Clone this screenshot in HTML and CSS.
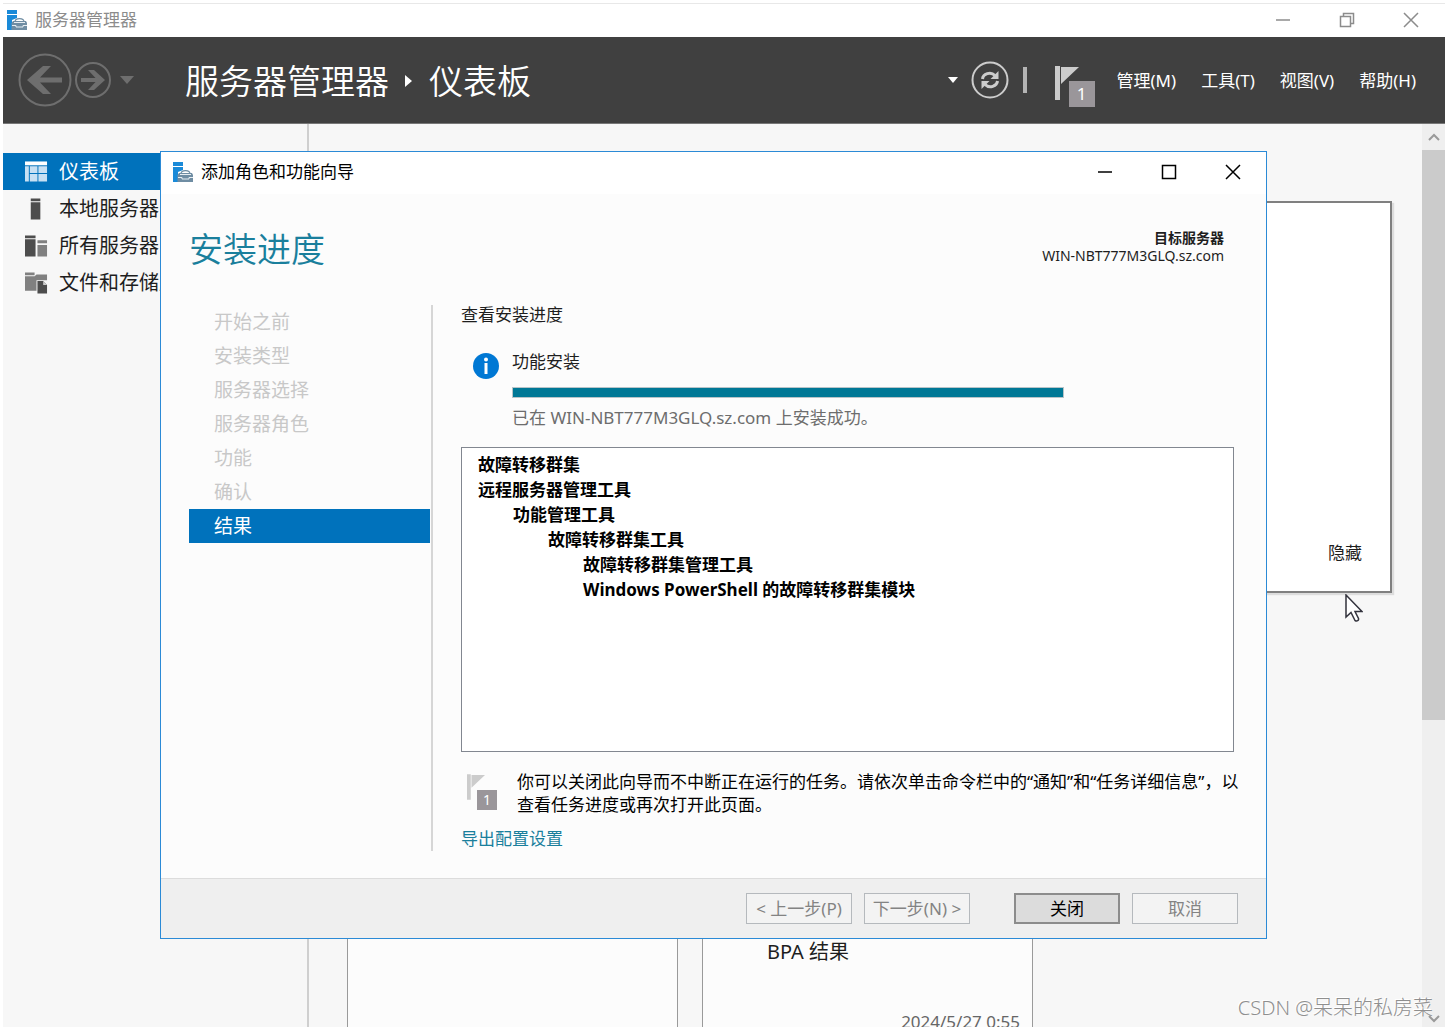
FILE: index.html
```html
<!DOCTYPE html>
<html lang="zh-CN">
<head>
<meta charset="utf-8">
<title>服务器管理器</title>
<link rel="stylesheet" href="styles.css">
</head>
<body>
<svg class="defs" aria-hidden="true">
  <symbol id="app-icon" viewBox="0 0 20 20">
    <path fill="#1a8ad8" d="M0 0h10v4H0zM0 5h10v3L5 10v10H0z"/>
    <path fill="none" stroke="#6f8da3" stroke-width="1.200" d="M8 12c0-4.500 9-4.500 9 0"/>
    <path fill="#6f8da3" d="M6 11h13l1 2v7H4.500v-7z"/>
    <path fill="none" stroke="#e6edf2" d="M7 12.500h11M5 15.500h4v1.500h7v-1.500h4"/>
  </symbol>
  <symbol id="flag-icon" viewBox="0 0 24 34">
    <path d="M0 0h5v34H0zM6 1h18L6 18z"/>
  </symbol>
</svg>
<div class="window">
  <header class="titlebar">
    <svg class="app-icon"><use href="#app-icon"/></svg>
    <span class="titlebar-text">服务器管理器</span>
    <div class="controls">
      <button class="control" aria-label="最小化"><svg viewBox="0 0 16 16"><path d="M1 8h14"/></svg></button>
      <button class="control" aria-label="还原"><svg viewBox="0 0 16 16"><path d="M1.500 4.500h10v10h-10zM4.500 4V1.500h10v10H12"/></svg></button>
      <button class="control" aria-label="关闭"><svg viewBox="0 0 16 16"><path d="M1 1l14 14M15 1L1 15"/></svg></button>
    </div>
  </header>
  <div class="banner">
    <div class="history">
      <button class="back" aria-label="后退"><svg viewBox="0 0 54 54"><circle cx="27" cy="27" r="25.500" fill="none" stroke="#6e6e6e" stroke-width="2"/><path fill="#6e6e6e" d="M9 27l16-14h8L22 24.500h22v5H22L33 41h-8z"/></svg></button>
      <button class="forward" aria-label="前进"><svg viewBox="0 0 38 38"><circle cx="19" cy="19" r="17" fill="none" stroke="#6e6e6e" stroke-width="2"/><path fill="#6e6e6e" d="M31 19L20 9h-6l7.500 8H7v4h14.500L14 29h6z"/></svg></button>
      <button class="recent" aria-label="最近的页面"><svg viewBox="0 0 14 8"><path fill="#6e6e6e" d="M0 0h14L7 8z"/></svg></button>
    </div>
    <h1 class="crumbs"><span>服务器管理器</span><svg viewBox="0 0 8 12"><path fill="#fff" d="M0 0l7 6-7 6z"/></svg><span>仪表板</span></h1>
    <div class="tools">
      <button class="drop" aria-label="更多"><svg viewBox="0 0 10 6"><path fill="#fff" d="M0 0h10L5 6z"/></svg></button>
      <button class="refresh" aria-label="刷新"><svg viewBox="0 0 38 38"><circle cx="19" cy="19" r="17.500" fill="none" stroke="#ccc" stroke-width="2"/><path fill="none" stroke="#ccc" stroke-width="3" d="M11.500 18c.5-5 8-8 12.500-3.500M26.500 20c-.5 5-8 8-12.500 3.500"/><path fill="#ccc" d="M27.500 10v8h-8zM10.500 28v-8h8z"/></svg></button>
      <span class="separator"></span>
      <button class="notify" aria-label="通知"><svg class="flag"><use href="#flag-icon"/></svg><span class="badge">1</span></button>
      <nav class="menu">
        <button>管理(M)</button><button>工具(T)</button><button>视图(V)</button><button>帮助(H)</button>
      </nav>
    </div>
  </div>
  <div class="workspace">
    <nav class="sidebar">
      <a class="side-item active" href="#dashboard"><svg viewBox="0 0 24 24"><path fill="#fff" d="M0 1h23v4H0z"/><path fill="#c7e0f3" d="M0 6h4v16H0zM5 6h8v7H5zM14 6h9v7h-9zM5 14h8v8H5zM14 14h9v8h-9z"/></svg>仪表板</a>
      <a class="side-item" href="#local"><svg viewBox="0 0 24 24"><path fill="#4d4d4d" d="M6 1h10v3H6zM6 5h10v18H6z"/></svg>本地服务器</a>
      <a class="side-item" href="#all"><svg viewBox="0 0 24 24"><path fill="#4d4d4d" d="M0 1h11v3H0zM0 5h11v18H0z"/><path fill="#808080" d="M13 6h10v3H13zM13 11h10v12H13z"/></svg>所有服务器</a>
      <a class="side-item" href="#files"><svg viewBox="0 0 24 24"><path fill="#808080" d="M0 1h10v3H0zM0 5h10l2-2h11v6H12v11H0z"/><path fill="#4d4d4d" d="M13 10h6l4 4v9H13z"/><path fill="#ccc" d="M19 10v4h4z"/></svg>文件和存储服务</a>
    </nav>
    <main class="dashboard">
      <section class="welcome"><button class="hide">隐藏</button></section>
      <div class="tiles">
        <section class="tile"></section>
        <section class="tile"><h2>BPA 结果</h2><time>2024/5/27 0:55</time></section>
      </div>
    </main>
    <div class="scrollbar">
      <svg viewBox="0 0 12 8"><path d="M1 7l5-5 5 5"/></svg>
      <div class="thumb"></div>
      <svg class="down" viewBox="0 0 12 8"><path d="M1 1l5 5 5-5"/></svg>
    </div>
  </div>
</div>

<div class="dialog" role="dialog" aria-labelledby="dialog-title">
  <header class="dialog-bar">
    <svg class="app-icon"><use href="#app-icon"/></svg>
    <span id="dialog-title">添加角色和功能向导</span>
    <div class="controls">
      <button class="control" aria-label="最小化"><svg viewBox="0 0 16 16"><path d="M1 8h14"/></svg></button>
      <button class="control" aria-label="最大化"><svg viewBox="0 0 16 16"><path d="M1.500 1.500h13v13h-13z"/></svg></button>
      <button class="control" aria-label="关闭"><svg viewBox="0 0 16 16"><path d="M1 1l14 14M15 1L1 15"/></svg></button>
    </div>
  </header>
  <div class="dialog-head">
    <h2>安装进度</h2>
    <p class="target"><strong>目标服务器</strong><br>WIN-NBT777M3GLQ.sz.com</p>
  </div>
  <div class="dialog-body">
    <ol class="steps">
      <li>开始之前</li><li>安装类型</li><li>服务器选择</li><li>服务器角色</li><li>功能</li><li>确认</li><li class="current">结果</li>
    </ol>
    <div class="progress-pane">
      <h3>查看安装进度</h3>
      <div class="status">
        <svg class="info" viewBox="0 0 26 26"><circle cx="13" cy="13" r="13" fill="#0078d4"/><circle cx="13" cy="6.500" r="2" fill="#fff"/><path fill="#fff" d="M11.500 10h3v11h-3z"/></svg>
        <div class="status-text">
          <label for="install">功能安装</label>
          <progress id="install" value="100" max="100"></progress>
          <p>已在 WIN-NBT777M3GLQ.sz.com 上安装成功。</p>
        </div>
      </div>
      <ul class="features">
        <li>故障转移群集</li>
        <li>远程服务器管理工具
          <ul><li>功能管理工具
            <ul><li>故障转移群集工具
              <ul><li>故障转移群集管理工具</li><li>Windows PowerShell 的故障转移群集模块</li></ul>
            </li></ul>
          </li></ul>
        </li>
      </ul>
      <div class="note">
        <span class="notify small"><svg class="flag"><use href="#flag-icon"/></svg><span class="badge">1</span></span>
        <p>你可以关闭此向导而不中断正在运行的任务。请依次单击命令栏中的“通知”和“任务详细信息”，以<br>查看任务进度或再次打开此页面。</p>
      </div>
      <a class="export" href="#export">导出配置设置</a>
    </div>
  </div>
  <footer class="dialog-foot">
    <button disabled>&lt; 上一步(P)</button>
    <button disabled>下一步(N) &gt;</button>
    <button class="primary">关闭</button>
    <button disabled>取消</button>
  </footer>
</div>
<svg class="pointer" viewBox="0 0 18 28"><path fill="#fff" stroke="#33333d" stroke-width="1.500" d="M1 1v22l5-4.500 4 8c2 1 4 0 3.500-2L10 17.500h7z"/></svg>
<div class="watermark">CSDN @呆呆的私房菜</div>
</body>
</html>
```
FILE: styles.css
```css
* { box-sizing: border-box; margin: 0; padding: 0; }
body {
  position: relative;
  height: 100vh;
  overflow: hidden;
  background: #fff;
  color: #1e1e1e;
  font: 17px/24px "Noto Sans", "Noto Sans CJK SC", sans-serif;
}
button { border: 0; background: none; color: inherit; font: inherit; white-space: nowrap; }
button svg { display: block; }
h1, h2, h3 { font-weight: 400; }
ul, ol { list-style: none; }
.defs { display: none; }

.window { display: flex; flex-direction: column; height: 100%; padding: 3px 2px 0 3px; }
.titlebar {
  display: flex; flex: none; align-items: center; height: 34px; padding: 0 26px 2px 4px;
  border-top: 1px solid #e8e8e8; color: #8c8c8c;
}
.app-icon { flex: none; width: 20px; height: 20px; margin-right: 8px; }
.controls { display: flex; gap: 48px; margin-left: auto; }
.control { width: 16px; height: 16px; }
.control svg { width: 16px; height: 16px; fill: none; stroke: currentColor; stroke-width: 1.500; }

.banner {
  display: flex; flex: none; align-items: center; height: 87px; padding: 0 29px 0 15px;
  background: #404040; color: #fff; border-bottom: 1px solid #777;
}
.history { display: flex; align-items: center; }
.back svg { width: 54px; height: 54px; }
.forward svg { width: 38px; height: 38px; margin-left: 2px; }
.recent svg { width: 14px; height: 8px; margin-left: 8px; }
.crumbs { display: flex; align-items: center; gap: 16px; margin-left: 51px; padding-top: 2px; font-size: 34px; line-height: 48px; font-weight: 350; white-space: nowrap; }
.crumbs svg { width: 8px; height: 12px; }
.tools { display: flex; align-items: center; margin-left: auto; }
.drop svg { width: 10px; height: 6px; }
.refresh svg { width: 38px; height: 38px; margin-left: 13px; }
.separator { width: 4px; height: 26px; margin-left: 14px; background: #b4b4b4; }
.notify { position: relative; display: block; flex: none; width: 40px; height: 48px; margin-left: 28px; }
.banner .notify { margin-top: 6px; }
.flag { display: block; width: 24px; height: 34px; fill: #ccc; }
.badge {
  position: absolute; right: 0; bottom: 0; width: 26px; height: 26px;
  background: #9a969a; color: #fff; font-size: 17px; line-height: 26px; text-align: center;
}
.menu { display: flex; gap: 25px; margin-left: 22px; padding-top: 2px; }

.workspace { display: flex; flex: 1; min-height: 0; background: #f7f7f7; }
.sidebar { flex: none; width: 306px; padding-top: 29px; border-right: 2px solid #cfcfcf; }
.side-item { display: flex; align-items: center; gap: 11px; height: 37px; padding-left: 22px; color: #1e1e1e; font-size: 20px; text-decoration: none; }
.side-item svg { width: 23px; height: 24px; }
.side-item.active { background: #0072bc; color: #fff; }
.dashboard { flex: 1; min-width: 0; padding: 77px 30px 0 38px; overflow: hidden; }
.welcome {
  display: flex; align-items: flex-end; justify-content: flex-end; height: 392px; padding: 26px 28px;
  background: #fff; border: 2px solid #808080; box-shadow: 2px 2px 1px #ddd;
}
.tiles { display: flex; gap: 24px; margin-top: 32px; }
.tile { display: flex; flex-direction: column; width: 331px; height: 480px; padding: 314px 12px 0 64px; background: #fcfcfc; border: 1px solid #9a9a9a; }
.tile h2 { font-size: 20px; line-height: 24px; }
.tile time { margin-top: 52px; color: #666; line-height: 12px; text-align: right; }
.scrollbar { display: flex; flex: none; flex-direction: column; align-items: center; width: 23px; padding: 9px 0 4px; background: #efefef; }
.scrollbar svg { flex: none; width: 12px; height: 8px; fill: none; stroke: #9a9a9a; stroke-width: 2; }
.scrollbar .down { margin-top: auto; }
.thumb { width: 100%; height: 64%; margin-top: 9px; background: #cbcbcb; }

.dialog { position: absolute; top: 151px; left: 160px; right: 180px; background: #fcfcfc; border: 1px solid #2b8ad6; }
.dialog-bar { display: flex; align-items: center; height: 42px; padding: 0 25px 2px 12px; background: #fff; color: #000; }
.dialog-head { display: flex; justify-content: space-between; padding: 31px 42px 0 28px; height: 111px; }
.dialog-head h2 { color: #1a7f9c; font-size: 34px; line-height: 48px; font-weight: 350; }
.target { margin-top: 4px; font-size: 14px; line-height: 18px; text-align: right; }
.dialog-body { display: flex; padding: 0 28px 27px; }
.steps { flex: none; width: 244px; padding-right: 1px; border-right: 2px solid #d6d6d6; color: #c8c8c8; font-size: 19px; line-height: 34px; }
.steps li { padding-left: 25px; }
.steps .current { background: #0072bc; color: #fff; }
.progress-pane { flex: 1; min-width: 0; padding-left: 28px; white-space: nowrap; }
.progress-pane h3 { font-size: 17px; line-height: 20px; }
.status { display: flex; gap: 13px; margin: 25px 0 17px 12px; }
.info { flex: none; width: 26px; height: 26px; margin-top: 3px; }
.status-text { flex: 1; display: flex; flex-direction: column; }
.status-text p { margin-top: 8px; color: #6d6d6d; }
progress { appearance: none; width: 76%; height: 11px; margin-top: 13px; border: 1px solid #b8c4c8; }
progress::-webkit-progress-bar { background: #e6e6e6; }
progress::-webkit-progress-value { background: #007896; }
.features { height: 305px; margin-right: 4px; padding: 4px 16px; background: #fff; border: 1px solid #828790; color: #000; font-weight: 700; line-height: 25px; }
.features ul { padding-left: 35px; }
.note { display: flex; align-items: flex-start; gap: 20px; margin: 18px 0 11px; color: #000; line-height: 23px; }
.notify.small { width: 30px; height: 36px; margin: 4px 0 0 6px; }
.small .flag { width: 18px; height: 26px; }
.small .badge { width: 20px; height: 20px; font-size: 14px; line-height: 20px; }
.export { display: block; color: #1a7f9c; text-decoration: none; }
.dialog-foot { display: flex; justify-content: flex-end; gap: 12px; padding: 14px 28px; background: #efefef; border-top: 1px solid #dcdcdc; }
.dialog-foot button { width: 106px; height: 31px; border: 1px solid #b5b9bd; background: #f3f3f3; color: #838383; }
.dialog-foot .primary { margin-left: 32px; border: 2px solid #8c8c8c; background: #dcdcdc; color: #000; }

.pointer { position: absolute; top: 594px; left: 1345px; width: 18px; height: 28px; }
.watermark { position: absolute; right: 14px; bottom: 5px; color: #8f8f8f; font-size: 20px; line-height: 28px; font-weight: 300; text-shadow: -1px -1px 0 #fff; }
```
